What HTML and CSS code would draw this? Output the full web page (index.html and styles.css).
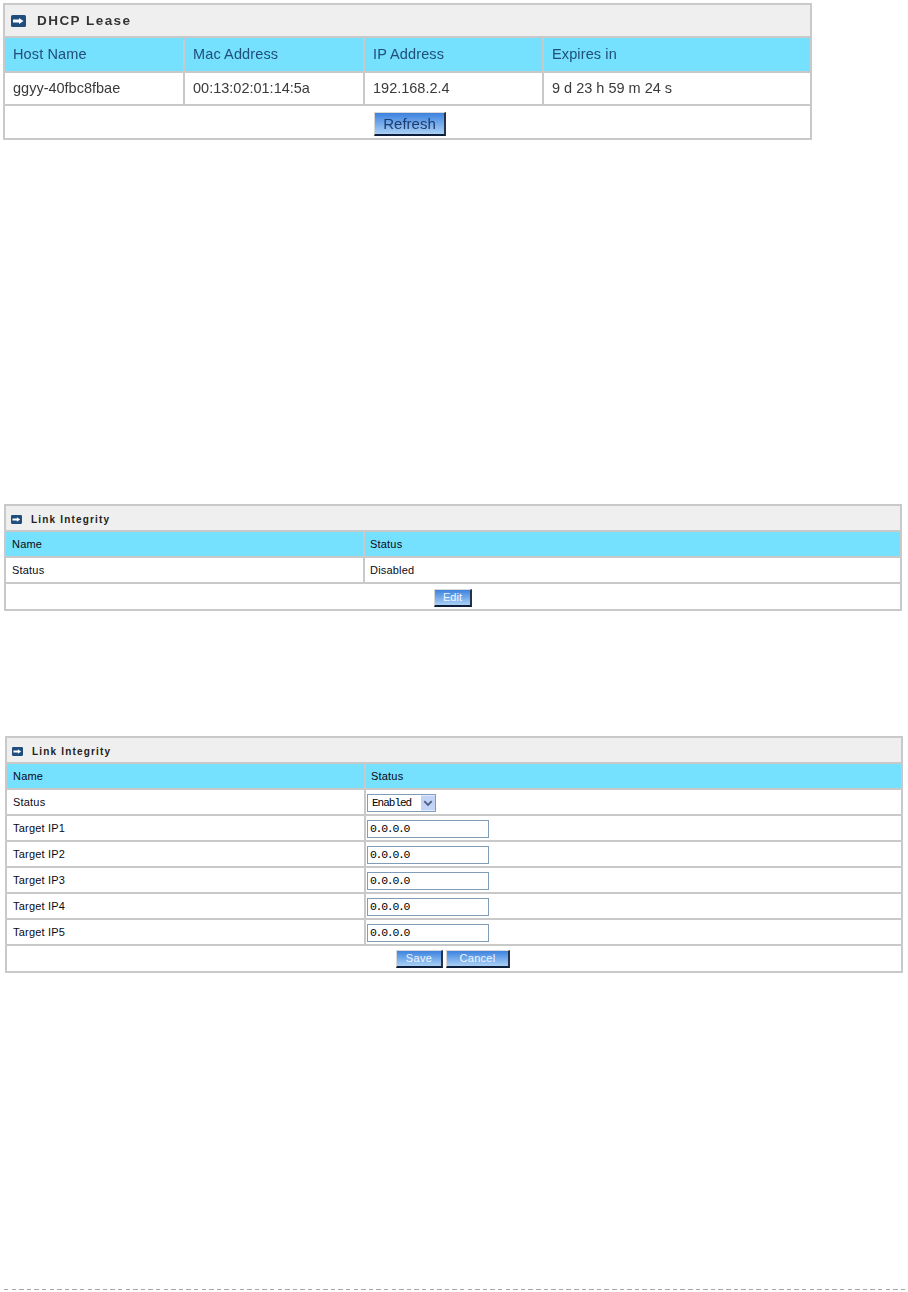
FILE: index.html
```html
<!DOCTYPE html>
<html lang="en">
<head>
<meta charset="utf-8">
<title>DHCP Lease and Link Integrity</title>
<link rel="stylesheet" href="styles.css">
</head>
<body>
<main class="page">
  <table class="panel panel-lease">
    <colgroup><col class="c1"><col class="c2"><col class="c3"><col class="c4"></colgroup>
    <tr class="title"><td colspan="4">
      <div class="title-wrap">
        <svg class="icon" viewBox="0 0 15 12" aria-hidden="true"><rect width="15" height="12" rx="1.5" fill="#1f4d7c"/><path d="M2 4.500h6V3l4.500 3L8 9V7.500H2z" fill="#fff"/></svg>
        <span>DHCP Lease</span>
      </div>
    </td></tr>
    <tr class="head"><td>Host Name</td><td>Mac Address</td><td>IP Address</td><td>Expires in</td></tr>
    <tr class="row"><td>ggyy-40fbc8fbae</td><td>00:13:02:01:14:5a</td><td>192.168.2.4</td><td>9 d 23 h 59 m 24 s</td></tr>
    <tr class="foot"><td colspan="4"><button class="btn btn-refresh" type="button">Refresh</button></td></tr>
  </table>

  <table class="panel panel-view">
    <colgroup><col class="n"><col></colgroup>
    <tr class="title"><td colspan="2">
      <div class="title-wrap">
        <svg class="icon" viewBox="0 0 15 12" aria-hidden="true"><rect width="15" height="12" rx="1.5" fill="#1f4d7c"/><path d="M2 4.500h6V3l4.500 3L8 9V7.500H2z" fill="#fff"/></svg>
        <span>Link Integrity</span>
      </div>
    </td></tr>
    <tr class="head"><td>Name</td><td>Status</td></tr>
    <tr class="row"><td>Status</td><td>Disabled</td></tr>
    <tr class="foot"><td colspan="2"><button class="btn btn-edit" type="button">Edit</button></td></tr>
  </table>

  <table class="panel panel-edit">
    <colgroup><col class="n"><col></colgroup>
    <tr class="title"><td colspan="2">
      <div class="title-wrap">
        <svg class="icon" viewBox="0 0 15 12" aria-hidden="true"><rect width="15" height="12" rx="1.5" fill="#1f4d7c"/><path d="M2 4.500h6V3l4.500 3L8 9V7.500H2z" fill="#fff"/></svg>
        <span>Link Integrity</span>
      </div>
    </td></tr>
    <tr class="head"><td>Name</td><td>Status</td></tr>
    <tr class="row"><td>Status</td><td>
      <div class="select-wrap">
        <select class="select"><option>Enabled</option><option>Disabled</option></select>
        <svg class="select-arrow" viewBox="0 0 15 16" aria-hidden="true"><rect width="15" height="16" fill="#c3d3f5"/><path d="M3.500 6l4 4 4-4" fill="none" stroke="#4d6185" stroke-width="2"/></svg>
      </div>
    </td></tr>
    <tr class="row"><td>Target IP1</td><td><input class="field" type="text" value="0.0.0.0"></td></tr>
    <tr class="row"><td>Target IP2</td><td><input class="field" type="text" value="0.0.0.0"></td></tr>
    <tr class="row"><td>Target IP3</td><td><input class="field" type="text" value="0.0.0.0"></td></tr>
    <tr class="row"><td>Target IP4</td><td><input class="field" type="text" value="0.0.0.0"></td></tr>
    <tr class="row"><td>Target IP5</td><td><input class="field" type="text" value="0.0.0.0"></td></tr>
    <tr class="foot"><td colspan="2"><div class="actions"><button class="btn btn-save" type="button">Save</button><button class="btn btn-cancel" type="button">Cancel</button></div></td></tr>
  </table>
  <div class="rule"></div>
</main>
</body>
</html>
```
FILE: styles.css
```css
html, body { margin: 0; padding: 0; background: #fff; height: 1292px; overflow: hidden; }
.page {
  font-family: "Liberation Sans", Arial, sans-serif;
  color: #111;
  height: 1292px;
  box-sizing: border-box;
  padding-top: 3px;
  position: relative;
}

.panel {
  table-layout: fixed;
  border-collapse: separate;
  border-spacing: 0;
  border: 2px solid #c9c9c9;
  background: #fff;
}
.panel td {
  padding: 0;
  border-right: 2px solid #c9c9c9;
  border-bottom: 2px solid #c9c9c9;
  vertical-align: middle;
  box-sizing: border-box;
}
.panel td:last-child { border-right: 0; }
.panel tr:last-child td { border-bottom: 0; }

.title td { background: #efefef; }
.head td { background: #76e0ff; }
.foot td { text-align: center; }

.title-wrap { display: flex; align-items: center; }
.icon { display: block; flex: none; }

/* Lease panel */
.panel-lease {
  width: 809px;
  margin: 0 0 0 3px;
  font-size: 14.5px;
  color: #3a3a3a;
  filter: blur(0.35px);
}
.panel-lease .c1 { width: 180px; }
.panel-lease .c2 { width: 180px; }
.panel-lease .c3 { width: 179px; }
.panel-lease .title td { height: 33px; }
.panel-lease .title-wrap { padding-left: 6px; gap: 11px; }
.panel-lease .icon { width: 15px; height: 12px; }
.panel-lease .title-wrap span { font-size: 13.5px; font-weight: bold; letter-spacing: 1.45px; color: #333; }
.panel-lease .head td { color: #214f78; height: 35px; padding: 0 0 2px 8px; letter-spacing: 0.12px; }
.panel-lease .row td { height: 33px; padding: 0 0 2px 8px; }
.panel-lease .foot td { height: 32px; padding-left: 5px; }

/* Link Integrity panels */
.panel-view, .panel-edit {
  width: 898px;
  font-size: 11px;
  letter-spacing: 0.2px;
  color: #0a0a14;
}
.panel-view { margin: 364px 0 0 4px; }
.panel-edit { margin: 125px 0 0 5px; }
.panel-view .n, .panel-edit .n { width: 359px; }
.panel-view .title td, .panel-edit .title td { height: 26px; }
.panel-view .head td, .panel-edit .head td,
.panel-view .row td, .panel-edit .row td { height: 26px; padding-left: 6px; }
.panel-view .head td:last-child, .panel-edit .head td:last-child,
.panel-view .row td:last-child, .panel-edit .row td:last-child { padding-left: 5px; }
.panel-view .foot td, .panel-edit .foot td { height: 25px; }
.panel-view .title-wrap, .panel-edit .title-wrap { padding: 2px 0 0 5px; gap: 9px; }
.panel-view .icon, .panel-edit .icon { width: 11px; height: 9px; }
.panel-view .title-wrap span, .panel-edit .title-wrap span { font-size: 10px; font-weight: bold; letter-spacing: 1.18px; color: #222; }

/* Buttons */
.btn {
  display: inline-block;
  box-sizing: border-box;
  margin: 0;
  padding: 0;
  font-family: "Liberation Sans", Arial, sans-serif;
  border-style: solid;
  border-width: 1px 2px 2px 1px;
  border-color: #d8d8d8 #25324a #0d1f3a #d8d8d8;
  background: linear-gradient(#3d82df, #a9d0f5);
  color: #eef6ff;
  vertical-align: middle;
}
.btn-refresh { width: 72px; height: 24px; font-size: 15px; color: #1d3c6e; margin-top: 3px; }
.btn-edit { width: 38px; height: 18px; font-size: 11px; margin-top: 2px; }
.btn-save { width: 47px; height: 18px; font-size: 11px; letter-spacing: 0.3px; }
.btn-cancel { width: 64px; height: 18px; font-size: 11px; letter-spacing: 0.3px; }
.actions { display: flex; justify-content: center; gap: 3px; padding-right: 2px; }

/* Form controls */
.field {
  display: block;
  box-sizing: border-box;
  width: 122px;
  height: 18px;
  margin: 2px 0 0 -4px;
  padding: 0 0 1px 2px;
  border: 1px solid #7f9db9;
  background: #fff;
  font-family: "Liberation Mono", "Courier New", monospace;
  font-size: 11.5px;
  letter-spacing: -1.3px;
  color: #000;
  outline: 0;
}
.select-wrap { position: relative; width: 69px; height: 18px; margin: 2px 0 0 -4px; }
.select {
  display: block;
  box-sizing: border-box;
  width: 69px;
  height: 18px;
  margin: 0;
  padding: 0 0 0 4px;
  border: 1px solid #7f9db9;
  border-radius: 0;
  background: #fff;
  appearance: none;
  font-family: "Liberation Mono", "Courier New", monospace;
  font-size: 11px;
  letter-spacing: -1px;
  color: #000;
}
.select-arrow { position: absolute; top: 1px; right: 1px; width: 14px; height: 16px; pointer-events: none; }

.rule {
  position: absolute;
  left: 4px;
  right: 0;
  top: 1289px;
  height: 1px;
  background: repeating-linear-gradient(90deg, #a6a6a6 0 4.500px, transparent 4.500px 7.600px);
}
```
